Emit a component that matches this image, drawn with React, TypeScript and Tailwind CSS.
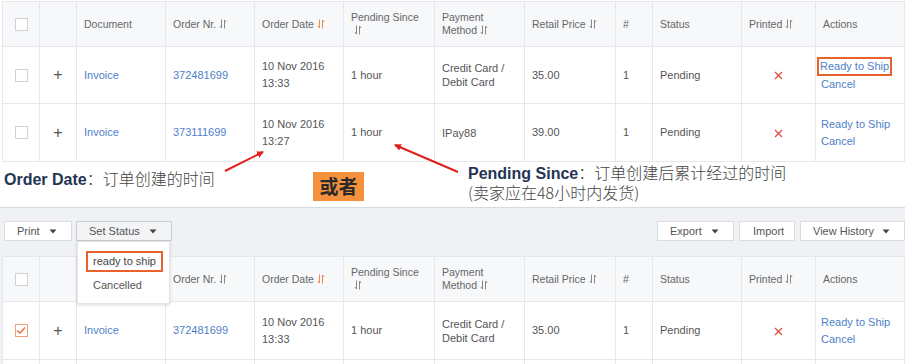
import React from "react";

const SortIcon = ({ active = false }: { active?: boolean }) => (
  <svg width="8" height="10" viewBox="0 0 8 10" className="inline-block align-[-1px] ml-[3px]">
    <g stroke={active ? "#f08a4b" : "#888"} strokeWidth="1" fill="none">
      <path d="M2.5 0.5 V9 L0.8 7" />
      <path d="M5.5 9.5 V1 L7.2 3" />
    </g>
  </svg>
);

const Check = ({ checked = false }: { checked?: boolean }) =>
  checked ? (
    <span className="inline-flex items-center justify-center w-[13px] h-[13px] border border-[#f0a07a] bg-white">
      <svg width="10" height="9" viewBox="0 0 10 9">
        <path d="M1 4.5 L4 7 L9 1.5" stroke="#ec6a3a" strokeWidth="1.4" fill="none" />
      </svg>
    </span>
  ) : (
    <span className="inline-block w-[13px] h-[13px] border border-[#cfd2d6] bg-white" />
  );

const Caret = () => (
  <svg width="8" height="5" viewBox="0 0 8 5" className="inline-block">
    <path d="M0.5 0.5 H7.5 L4 4.5 Z" fill="#444" />
  </svg>
);

const Cols = () => (
  <colgroup>
    <col className="w-[37px]" />
    <col className="w-[37px]" />
    <col className="w-[89px]" />
    <col className="w-[89px]" />
    <col className="w-[89px]" />
    <col className="w-[91px]" />
    <col className="w-[90px]" />
    <col className="w-[91px]" />
    <col className="w-[37px]" />
    <col className="w-[89px]" />
    <col className="w-[74px]" />
    <col className="w-[89px]" />
  </colgroup>
);

const th = "border border-[#e5e7ea] px-[7px] text-left font-normal align-middle text-[10.5px] leading-[13px] text-[#666]";
const cell = "border border-[#e5e7ea] px-[7px] align-middle text-[11px]";
const td = `${cell} text-[#555]`;
const link = `${cell} text-[#4f7fc9]`;

const Header = ({ hideDoc = false }: { hideDoc?: boolean }) => (
  <thead>
    <tr className="h-[45px] bg-[#f7f8fa]">
      <th className={`${th} text-center`}>
        <span className="flex justify-center">
          <Check />
        </span>
      </th>
      <th className={th}></th>
      <th className={th}>{hideDoc ? "" : "Document"}</th>
      <th className={th}>
        Order Nr.
        <SortIcon />
      </th>
      <th className={th}>
        Order Date
        <SortIcon active />
      </th>
      <th className={th}>
        Pending Since
        <br />
        <SortIcon />
      </th>
      <th className={th}>
        Payment
        <br />
        Method
        <SortIcon />
      </th>
      <th className={th}>
        Retail Price
        <SortIcon />
      </th>
      <th className={th}>#</th>
      <th className={th}>Status</th>
      <th className={th}>
        Printed
        <SortIcon />
      </th>
      <th className={th}>Actions</th>
    </tr>
  </thead>
);

type RowProps = {
  order: string;
  time: string;
  payment: React.ReactNode;
  price: string;
  checked?: boolean;
  boxed?: boolean;
  h: string;
};

const Row = ({ order, time, payment, price, checked = false, boxed = false, h }: RowProps) => (
  <tr className={`${h} bg-white`}>
    <td className={td}>
      <span className="flex justify-center">
        <Check checked={checked} />
      </span>
    </td>
    <td className={`${cell} text-center text-[16px] font-light text-[#555]`}>+</td>
    <td className={link}>Invoice</td>
    <td className={link}>{order}</td>
    <td className={`${td} leading-[17px]`}>
      10 Nov 2016
      <br />
      {time}
    </td>
    <td className={td}>1 hour</td>
    <td className={`${td} leading-[14px]`}>{payment}</td>
    <td className={td}>{price}</td>
    <td className={td}>1</td>
    <td className={td}>Pending</td>
    <td className={`${td} text-center`}>
      <svg width="9" height="9" viewBox="0 0 9 9" className="inline-block">
        <path d="M1 1 L8 8 M8 1 L1 8" stroke="#e04a44" strokeWidth="1.3" />
      </svg>
    </td>
    <td className={`${link} pl-[2px] pr-0 leading-[17px]`}>
      <div className="flex flex-col items-start">
        <span
          className={
            boxed
              ? "border-2 border-[#e8632b] px-[1px] leading-[15px] -ml-[1px]"
              : "pl-[3px] leading-[17px]"
          }
        >
          Ready to Ship
        </span>
        <span className="pl-[3px]">Cancel</span>
      </div>
    </td>
  </tr>
);

const EmptyRow = () => (
  <tr className="h-[58px] bg-white">
    <td className={td}></td>
    <td className={td}></td>
    <td className={td}></td>
    <td className={td}></td>
    <td className={td}></td>
    <td className={td}></td>
    <td className={td}></td>
    <td className={td}></td>
    <td className={td}></td>
    <td className={td}></td>
    <td className={td}></td>
    <td className={td}></td>
  </tr>
);

const Btn = ({ w, label, caret = true, active = false, pl }: { w: string; label: string; caret?: boolean; active?: boolean; pl: string }) => (
  <div
    className={`${w} h-[20px] flex items-center ${pl} text-[11px] text-[#555] border ${
      active ? "bg-[#f3f4f6] border-[#c9ccd1]" : "bg-white border-[#d9dce0]"
    }`}
  >
    <span>{label}</span>
    {caret && (
      <span className="ml-auto mr-[14px] flex">
        <Caret />
      </span>
    )}
  </div>
);

export default function App() {
  return (
    <div className="relative w-[905px] h-[364px] overflow-hidden bg-white font-['Liberation_Sans','Noto_Sans_CJK_SC',sans-serif]">
      {/* top table */}
      <div className="pl-[2px] pt-[1px]">
        <table className="table-fixed border-collapse w-[902px] border border-[#d9dce0]">
          <Cols />
          <Header />
          <tbody>
            <Row
              h="h-[57px]"
              order="372481699"
              time="13:33"
              payment={
                <>
                  Credit Card /
                  <br />
                  Debit Card
                </>
              }
              price="35.00"
              boxed
            />
            <Row h="h-[58px]" order="373111699" time="13:27" payment="IPay88" price="39.00" />
          </tbody>
        </table>
      </div>

      {/* annotations */}
      <div className="flex items-start h-[45px]">
        <div className="w-[313px] pl-[4px] pt-[7px] text-[16px] leading-[18px] text-[#444]">
          <span className="font-bold text-[#243553]">Order Date</span>
          <span className="font-['Noto_Sans_CJK_SC',sans-serif] font-light">：订单创建的时间</span>
        </div>
        <div className="mt-[10px] w-[51px] h-[29px] bg-[#f5913c] flex items-center justify-center text-[19px] font-bold text-[#2a2a2a] font-['Noto_Sans_CJK_SC',sans-serif]">
          或者
        </div>
        <div className="ml-[104px] pt-[1px] text-[16px] leading-[18px] text-[#444]">
          <div>
            <span className="font-bold text-[#243553]">Pending Since</span>
            <span className="font-['Noto_Sans_CJK_SC',sans-serif] font-light">：订单创建后累计经过的时间</span>
          </div>
          <div className="font-['Noto_Sans_CJK_SC',sans-serif] font-light">(卖家应在48小时内发货)</div>
        </div>
      </div>

      {/* bottom section */}
      <div className="relative border-t border-[#d8dbdf] bg-[#f0f1f4] h-[200px]">
        <div className="flex items-center pt-[13px] pl-[4px]">
          <Btn w="w-[68px]" pl="pl-[12px]" label="Print" />
          <div className="ml-[4px]">
            <Btn w="w-[96px]" pl="pl-[12px]" label="Set Status" active />
          </div>
          <div className="ml-auto flex gap-[5px]">
            <Btn w="w-[77px]" pl="pl-[12px]" label="Export" />
            <Btn w="w-[56px]" pl="pl-[13px]" label="Import" caret={false} />
            <Btn w="w-[105px]" pl="pl-[12px]" label="View History" />
          </div>
        </div>

        <div className="pl-[2px] pt-[15px]">
          <table className="table-fixed border-collapse w-[902px] border border-[#d9dce0]">
            <Cols />
            <Header hideDoc />
            <tbody>
              <Row
                h="h-[58px]"
                order="372481699"
                time="13:33"
                payment={
                  <>
                    Credit Card /
                    <br />
                    Debit Card
                  </>
                }
                price="35.00"
                checked
              />
              <EmptyRow />
            </tbody>
          </table>
        </div>

        {/* dropdown menu */}
        <div className="absolute left-[77px] top-[33px] w-[93px] h-[63px] bg-white border border-[#e2e4e7] shadow-[0_1px_3px_rgba(0,0,0,0.15)]">
          <div className="ml-[8px] mt-[9px] w-[77px] h-[21px] border-2 border-[#e8632b] flex items-center pl-[5px] text-[11px] text-[#444]">
            ready to ship
          </div>
          <div className="ml-[15px] mt-[5px] text-[11px] text-[#555]">Cancelled</div>
        </div>
      </div>

      {/* arrows */}
      <svg className="absolute left-0 top-0 pointer-events-none" width="905" height="364">
        <defs>
          <marker id="ah" markerWidth="8" markerHeight="8" refX="6" refY="4" orient="auto" markerUnits="userSpaceOnUse">
            <path d="M0 0.5 L7 4 L0 7.5 Z" fill="#e0201c" />
          </marker>
        </defs>
        <line x1="225" y1="171" x2="263" y2="152" stroke="#e0201c" strokeWidth="2" markerEnd="url(#ah)" />
        <line x1="458" y1="172" x2="395" y2="145" stroke="#e0201c" strokeWidth="2" markerEnd="url(#ah)" />
      </svg>
    </div>
  );
}
